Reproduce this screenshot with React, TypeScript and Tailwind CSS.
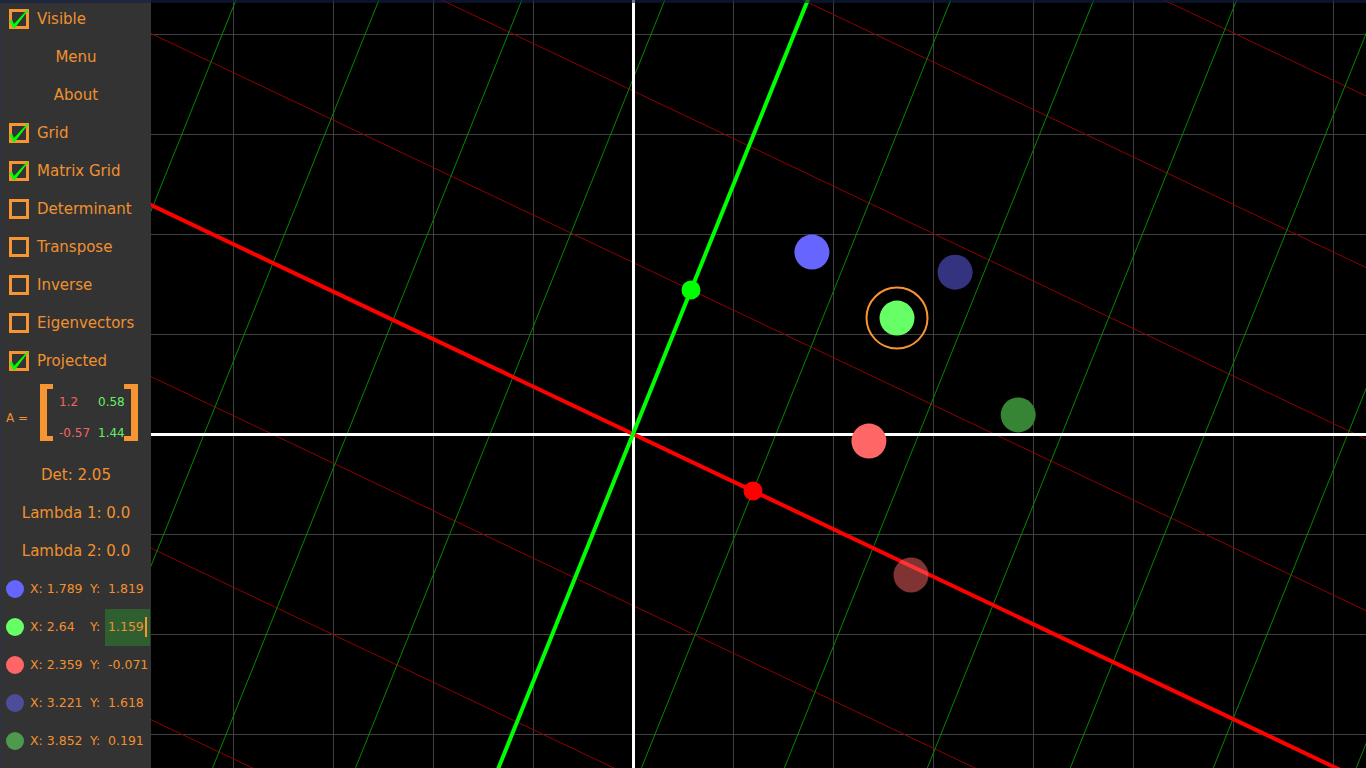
import React from 'react';

const ORANGE = '#f0902f';

// origin of the plane on screen and the pixel scale per unit
const OX = 633;
const OY = 434;
const S = 100;

const matrix = { a: 1.2, b: 0.58, c: -0.57, d: 1.44 };

type Pt = { x: number; y: number; color: string; list: string; label: [string, string] };

const points: Pt[] = [
  { x: 1.789, y: 1.819, color: '#6666ff', list: '#6666ff', label: ['1.789', '1.819'] },
  { x: 2.64, y: 1.159, color: '#66ff66', list: '#66ff66', label: ['2.64', '1.159'] },
  { x: 2.359, y: -0.071, color: '#ff6666', list: '#ff6666', label: ['2.359', '-0.071'] },
  { x: 3.221, y: 1.618, color: '#333380', list: '#4d4d99', label: ['3.221', '1.618'] },
  { x: 3.852, y: 0.191, color: '#358535', list: '#4d994d', label: ['3.852', '0.191'] },
];

const toScreen = (x: number, y: number) => [OX + x * S, OY - y * S];

const Checkbox = ({ checked }: { checked: boolean }) => (
  <div className="relative w-[20px] h-[20px] shrink-0">
    <div className="absolute inset-0 border-[3px] border-[#f79533]" />
    {checked && (
      <svg className="absolute inset-0 overflow-visible" width="20" height="20" viewBox="0 0 20 20">
        <path
          d="M0.6 12.2 L3 10.6 L5 15 L18.4 0.4 L19.3 1.2 L5.8 19 L4.2 19 Z"
          fill="#00ff00"
        />
      </svg>
    )}
  </div>
);

const ToggleRow = ({ label, checked }: { label: string; checked: boolean }) => (
  <div className="h-[38px] flex items-center pl-[8px] gap-[8px] text-[15px]">
    <Checkbox checked={checked} />
    <span>{label}</span>
  </div>
);

const CenterRow = ({ children }: { children: React.ReactNode }) => (
  <div className="h-[38px] flex items-center justify-center text-[15px]">{children}</div>
);

const MatrixBlock = () => (
  <div className="h-[76px] flex items-start">
    <div className="w-[39px] shrink-0 pl-[5px] mt-[31px] text-[12px] leading-[14px]">A =</div>
    <div className="w-[13px] shrink-0 h-[57px] mt-[4px] border-l-[7px] border-y-[5px] border-[#f79533]" />
    <div className="w-[71px] shrink-0 pt-[15px] pl-[6px] text-[12px] leading-[15px]">
      <div className="flex">
        <span className="w-[39px] shrink-0 text-[#f26464]">{matrix.a}</span>
        <span className="shrink-0 text-[#66ee66]">{matrix.b}</span>
      </div>
      <div className="flex mt-[16px]">
        <span className="w-[39px] shrink-0 text-[#f26464]">{matrix.c}</span>
        <span className="shrink-0 text-[#66ee66]">{matrix.d}</span>
      </div>
    </div>
    <div className="w-[14px] shrink-0 h-[57px] mt-[4px] border-r-[7px] border-y-[5px] border-[#f79533]" />
  </div>
);

const PointRow = ({ p, editing }: { p: Pt; editing: boolean }) => (
  <div className="h-[38px] flex items-center text-[12.5px]">
    <div className="w-[18px] h-[18px] ml-[5px] rounded-full shrink-0" style={{ backgroundColor: p.list }} />
    <div className="w-[66px] shrink-0 pl-[6px] whitespace-nowrap">X: {p.label[0]}</div>
    <div className="w-[15px] shrink-0">Y:</div>
    <div
      className={
        editing
          ? 'w-[45px] shrink-0 h-[37px] pl-[3px] flex items-center bg-[#2f5f31] whitespace-nowrap'
          : 'w-[45px] shrink-0 pl-[3px] whitespace-nowrap'
      }
    >
      {p.label[1]}
      {editing && <span className="w-[2px] h-[20px] bg-[#f79533] ml-[1px]" />}
    </div>
  </div>
);

const Sidebar = () => (
  <div
    className="w-[151px] h-full shrink-0 bg-[#333333] border-l border-[#2a3446] flex flex-col"
    style={{ color: ORANGE }}
  >
    <ToggleRow label="Visible" checked />
    <CenterRow>Menu</CenterRow>
    <CenterRow>About</CenterRow>
    <ToggleRow label="Grid" checked />
    <ToggleRow label="Matrix Grid" checked />
    <ToggleRow label="Determinant" checked={false} />
    <ToggleRow label="Transpose" checked={false} />
    <ToggleRow label="Inverse" checked={false} />
    <ToggleRow label="Eigenvectors" checked={false} />
    <ToggleRow label="Projected" checked />
    <MatrixBlock />
    <CenterRow>Det: 2.05</CenterRow>
    <CenterRow>Lambda 1: 0.0</CenterRow>
    <CenterRow>Lambda 2: 0.0</CenterRow>
    {points.map((p, i) => (
      <PointRow key={i} p={p} editing={i === 1} />
    ))}
  </div>
);

const Plane = () => {
  const ix = matrix.a * S;
  const iy = -matrix.c * S;
  const jx = matrix.b * S;
  const jy = -matrix.d * S;
  const ks = Array.from({ length: 31 }, (_, i) => i - 15);

  const gridX = Array.from({ length: 13 }, (_, i) => 133 + i * 100);
  const gridY = Array.from({ length: 8 }, (_, i) => 34 + i * 100);

  const [rx, ry] = toScreen(2.78, -1.41);
  const sel = toScreen(points[1].x, points[1].y);

  return (
    <svg className="flex-1 h-full block" viewBox="151 0 1215 768" width="1215" height="768">
      <rect x="151" y="0" width="1215" height="768" fill="#000000" />
      <g stroke="#404040" strokeWidth="1" shapeRendering="crispEdges">
        {gridX.map((x) => (
          <line key={'gx' + x} x1={x + 0.5} y1="0" x2={x + 0.5} y2="768" />
        ))}
        {gridY.map((y) => (
          <line key={'gy' + y} x1="151" y1={y + 0.5} x2="1366" y2={y + 0.5} />
        ))}
      </g>
      <g strokeWidth="1">
        {ks.map((k) => {
          const px = OX + k * jx;
          const py = OY + k * jy;
          return (
            <line
              key={'r' + k}
              x1={px - 20 * ix}
              y1={py - 20 * iy}
              x2={px + 20 * ix}
              y2={py + 20 * iy}
              stroke="#8e0000"
            />
          );
        })}
        {ks.map((k) => {
          const px = OX + k * ix;
          const py = OY + k * iy;
          return (
            <line
              key={'g' + k}
              x1={px - 20 * jx}
              y1={py - 20 * jy}
              x2={px + 20 * jx}
              y2={py + 20 * jy}
              stroke="#008a00"
            />
          );
        })}
      </g>
      <line x1={OX + 0.5} y1="0" x2={OX + 0.5} y2="768" stroke="#ffffff" strokeWidth="3" />
      <line x1="151" y1={OY + 0.5} x2="1366" y2={OY + 0.5} stroke="#ffffff" strokeWidth="3" />
      <line x1={OX - 20 * ix} y1={OY - 20 * iy} x2={OX + 20 * ix} y2={OY + 20 * iy} stroke="#ff0000" strokeWidth="4" />
      <line x1={OX - 20 * jx} y1={OY - 20 * jy} x2={OX + 20 * jx} y2={OY + 20 * jy} stroke="#00ff00" strokeWidth="4" />
      <circle cx={OX + ix} cy={OY + iy} r="9.5" fill="#ff0000" />
      <circle cx={OX + jx} cy={OY + jy} r="9.5" fill="#00ff00" />
      {points.map((p, i) => {
        const [x, y] = toScreen(p.x, p.y);
        return <circle key={i} cx={x} cy={y} r="17.5" fill={p.color} />;
      })}
      <circle cx={rx} cy={ry} r="17.5" fill="#ff6666" fillOpacity="0.5" />
      <circle cx={sel[0]} cy={sel[1]} r="30.5" fill="none" stroke="#f79533" strokeWidth="2" />
    </svg>
  );
};

export default function App() {
  return (
    <div
      className="relative w-[1366px] h-[768px] overflow-hidden flex bg-black"
      style={{ fontFamily: '"DejaVu Sans", Verdana, sans-serif' }}
    >
      <Sidebar />
      <Plane />
      <div className="absolute top-0 left-0 right-0 h-[3px] bg-[#102046]/60" />
    </div>
  );
}
